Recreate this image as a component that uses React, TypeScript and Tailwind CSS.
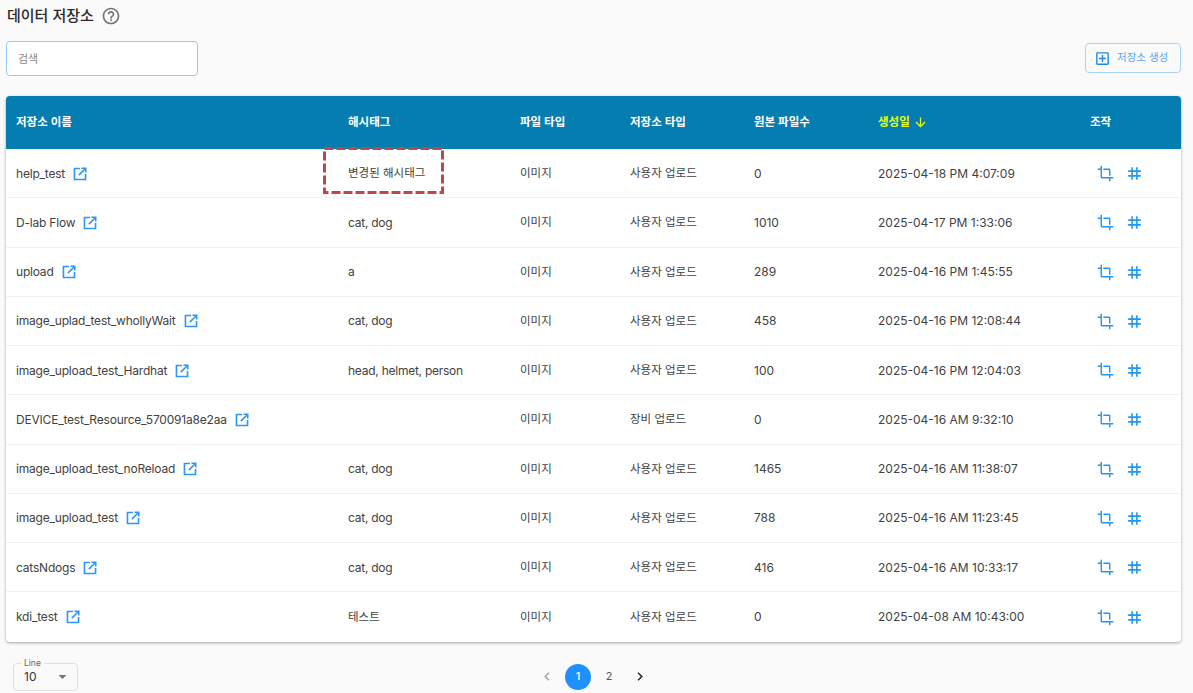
import { MdCrop, MdTag, MdHelpOutline, MdOutlineAddBox, MdArrowDownward, MdArrowDropDown, MdChevronLeft, MdChevronRight } from "react-icons/md";

const rows = [
  ["help_test", "변경된 해시태그", "사용자 업로드", "0", "2025-04-18 PM 4:07:09"],
  ["D-lab Flow", "cat, dog", "사용자 업로드", "1010", "2025-04-17 PM 1:33:06"],
  ["upload", "a", "사용자 업로드", "289", "2025-04-16 PM 1:45:55"],
  ["image_uplad_test_whollyWait", "cat, dog", "사용자 업로드", "458", "2025-04-16 PM 12:08:44"],
  ["image_upload_test_Hardhat", "head, helmet, person", "사용자 업로드", "100", "2025-04-16 PM 12:04:03"],
  ["DEVICE_test_Resource_570091a8e2aa", "", "장비 업로드", "0", "2025-04-16 AM 9:32:10"],
  ["image_upload_test_noReload", "cat, dog", "사용자 업로드", "1465", "2025-04-16 AM 11:38:07"],
  ["image_upload_test", "cat, dog", "사용자 업로드", "788", "2025-04-16 AM 11:23:45"],
  ["catsNdogs", "cat, dog", "사용자 업로드", "416", "2025-04-16 AM 10:33:17"],
  ["kdi_test", "테스트", "사용자 업로드", "0", "2025-04-08 AM 10:43:00"],
];

const cols = "grid grid-cols-[332px_172px_110px_124px_124px_212px_101px]";

function OpenIcon() {
  return (
    <svg viewBox="0 0 24 24" className="h-[14px] w-[14px] text-[#2f97f3]" fill="none" stroke="currentColor" strokeWidth="2.8">
      <path d="M12 2.5H2.5v19h19V12" />
      <path d="M10 14 21 3M14.5 2.2h7.3v7.3" />
    </svg>
  );
}

export default function App() {
  return (
    <div className="h-[693px] w-[1193px] overflow-hidden bg-[#fafafa] pl-[6px] text-[#424242] font-['Inter','Noto_Sans_CJK_KR',sans-serif]">
      <div className="w-[1175px]">
        <div className="flex h-[31px] items-center gap-[7px] pl-px">
          <h1 className="text-[15px] font-medium leading-none text-[#2b2b2b]">데이터 저장소</h1>
          <MdHelpOutline className="text-[20px] text-[#757575]" />
        </div>
        <div className="mt-[9px] flex h-[36px] items-start justify-between">
          <div className="mt-px flex h-[35px] w-[192px] items-center rounded-[4px] border-[1.5px] border-[#90caf9] bg-white px-[11px] pt-px text-[11px] text-[#8a8a8a]">검색</div>
          <button className="mt-[3px] flex h-[30px] w-[96px] items-center gap-[6px] rounded-[4px] border border-[#a6d4fa] pl-[8px] text-[10.5px] text-[#4fa8f3]">
            <MdOutlineAddBox className="text-[17px] text-[#1e88e5]" />
            저장소 생성
          </button>
        </div>
        <div className="mt-[20px] rounded-[4px] bg-white shadow-[0_1px_3px_rgba(0,0,0,0.35)]">
          <div className={`${cols} h-[53px] items-center rounded-t-[4px] bg-[#067db1] pl-[10px] text-[11.5px] font-semibold text-white`}>
            <div>저장소 이름</div>
            <div>해시태그</div>
            <div>파일 타입</div>
            <div>저장소 타입</div>
            <div>원본 파일수</div>
            <div className="flex items-center gap-[3px] text-[#e4ff1a]">
              생성일 <MdArrowDownward className="text-[15px]" />
            </div>
            <div>조작</div>
          </div>
          {rows.map((r, i) => (
            <div key={r[0]} className={`${cols} h-[49.25px] items-center pl-[10px] pt-px text-[12px] ${i < 9 ? "border-b border-[#f2f2f2]" : ""}`}>
              <div className="flex items-center gap-[8px]">
                <span className="tracking-[-0.2px]">{r[0]}</span>
                <OpenIcon />
              </div>
              <div className="relative text-[11.5px]">
                <span className={/^[a-z]/.test(r[1]) ? "text-[12px] tracking-[-0.25px]" : ""}>{r[1]}</span>
                {i === 0 && (
                  <svg className="absolute left-[-25px] top-[-18px] h-[47px] w-[121px]" viewBox="0 0 121 47" fill="none">
                    <rect x="1.5" y="1.5" width="118" height="44" stroke="#b84a4a" strokeWidth="3" strokeDasharray="9 3" />
                  </svg>
                )}
              </div>
              <div className="text-[11.5px]">이미지</div>
              <div className="text-[11.5px]">{r[2]}</div>
              <div>{r[3]}</div>
              <div>{r[4]}</div>
              <div className="flex items-center gap-[11px] pl-[7px] text-[#2196f3]">
                <MdCrop className="text-[17px]" />
                <MdTag className="text-[19px]" />
              </div>
            </div>
          ))}
        </div>
        <div className="relative mt-[22px] flex items-center justify-center">
          <div className="absolute left-[7px] top-[-1px] flex h-[28px] w-[65px] items-center rounded-[4px] border border-[#e0e0e0] pl-[10px] text-[12px] text-[#333]">
            <span className="absolute left-[7px] top-[-7px] bg-[#fafafa] px-[3px] text-[8.5px] leading-[12px] text-[#666]">Line</span>
            10
            <MdArrowDropDown className="absolute right-[5px] top-[3px] text-[19px] text-[#757575]" />
          </div>
          <div className="flex items-center gap-[5px] text-[11px]">
            <MdChevronLeft className="w-[26px] text-[17px] text-[#9e9e9e]" />
            <span className="flex h-[26px] w-[26px] items-center justify-center rounded-full bg-[#1e90ff] font-medium text-white">1</span>
            <span className="flex h-[26px] w-[26px] items-center justify-center text-[#555]">2</span>
            <MdChevronRight className="w-[26px] text-[17px] text-[#222]" />
          </div>
        </div>
      </div>
    </div>
  );
}
